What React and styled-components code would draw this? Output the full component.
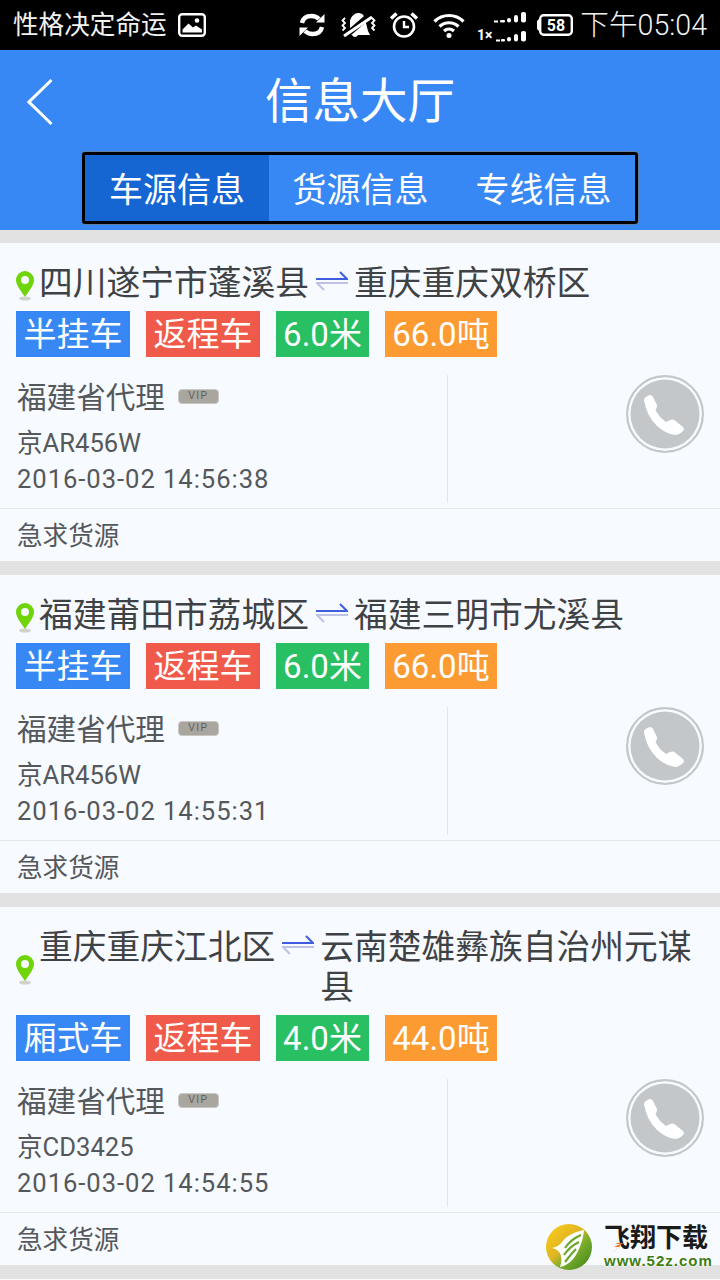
import React from 'react'
import styled, { createGlobalStyle } from 'styled-components'

const COLOR = {
  blue: '#3788f4',
  blueDark: '#1565d3',
  red: '#ef5a4a',
  green: '#28c063',
  orange: '#fb9b32',
  gap: '#e2e2e2',
  card: '#f7faff',
  line: '#e3e5e6',
  text: '#3f4245',
  sub: '#55585b',
}

const FONT = `Roboto, 'Noto Sans CJK SC', sans-serif`

const GlobalStyle = createGlobalStyle`
  html, body {
    margin: 0;
    padding: 0;
    background: ${COLOR.card};
  }
  * {
    box-sizing: border-box;
  }
`

const Page = styled.div`
  position: relative;
  width: 720px;
  height: 1280px;
  overflow: hidden;
  background: ${COLOR.card};
  font-family: ${FONT};
`

const StatusBar = styled.div`
  display: flex;
  align-items: center;
  justify-content: space-between;
  height: 50px;
  padding: 0 13px;
  background: #000;
  color: #f2f2f2;
`

const StatusGroup = styled.div`
  display: flex;
  align-items: center;
`

const StatusTitle = styled.span`
  font-size: 25.6px;
  line-height: 50px;
  margin-right: 11px;
`

const StatusTime = styled.span`
  font-size: 28.6px;
  font-weight: 300;
  line-height: 52px;
`

const StatusIcon = styled.svg`
  display: block;
  flex: none;
  overflow: visible;
  margin-left: ${(p) => p.$gap || 0}px;
  margin-top: ${(p) => p.$top || 0}px;
`

const Header = styled.div`
  background: ${COLOR.blue};
  border-bottom: 13px solid ${COLOR.gap};
  height: 193px;
  padding-top: 22px;
`

const TitleRow = styled.div`
  position: relative;
  display: flex;
  align-items: center;
  justify-content: center;
  height: 60px;
`

const BackIcon = styled.svg`
  position: absolute;
  left: 27px;
  top: 6px;
`

const Title = styled.div`
  color: #fff;
  font-size: 47.5px;
  line-height: 60px;
`

const Tabs = styled.div`
  display: flex;
  width: 556px;
  height: 72px;
  margin: 20px auto 0;
  border: 3px solid #000;
  border-radius: 3px;
  box-shadow: 0 0 0 1px #5f7ea8;
`

const Tab = styled.div`
  flex: ${(p) => (p.$active ? '0 0 184px' : 1)};
  display: flex;
  align-items: center;
  justify-content: center;
  padding-bottom: 2px;
  color: #fff;
  font-size: 34px;
  background: ${(p) => (p.$active ? COLOR.blueDark : 'transparent')};
`

const Card = styled.div`
  border-bottom: 14px solid ${COLOR.gap};
  padding-top: 21px;
`

const Route = styled.div`
  display: flex;
  align-items: center;
  padding: 0 16px;
  color: ${COLOR.text};
  font-size: 33.75px;
  line-height: 40px;
`

const PinIcon = styled.svg`
  flex: none;
  margin: 3px 5px 0 0;
`

const Place = styled.div`
  flex: ${(p) => (p.$grow ? 1 : 'none')};
  align-self: flex-start;
`

const SwapIcon = styled.svg`
  flex: none;
  align-self: flex-start;
  margin: 7px 6px 0 7px;
`

const TagRow = styled.div`
  display: flex;
  gap: 16px;
  padding: 7px 16px 0;
`

const Tag = styled.div`
  min-width: ${(p) => p.$min || 0}px;
  height: 46px;
  padding: 0 7px;
  background: ${(p) => p.$color};
  color: #fff;
  font-size: 33px;
  line-height: 48px;
  text-align: center;
  white-space: nowrap;
`

const Info = styled.div`
  display: flex;
  height: 128px;
  margin-top: 18px;
`

const Owner = styled.div`
  width: 448px;
  padding-left: 17px;
  border-right: 1px solid ${COLOR.line};
  color: ${COLOR.sub};
`

const OwnerName = styled.div`
  display: flex;
  align-items: center;
  height: 40px;
  font-size: 29.6px;
`

const Vip = styled.span`
  display: block;
  width: 41px;
  height: 15px;
  margin: 2px 0 0 13px;
  border: 1.5px solid #c9c7c3;
  border-radius: 4px;
  background: #a9a6a0;
  color: #5f5c57;
  font-family: 'Liberation Sans', sans-serif;
  font-size: 10px;
  line-height: 12px;
  letter-spacing: 1.5px;
  text-align: center;
`

const Plate = styled.div`
  margin-top: 10px;
  font-size: 25.6px;
  line-height: 36px;
`

const DateText = styled.div`
  font-size: 25.6px;
  line-height: 36px;
  letter-spacing: 0.95px;
`

const CallCell = styled.div`
  flex: 1;
  display: flex;
  justify-content: flex-end;
  padding-right: 16px;
`

const CallButton = styled.div`
  display: flex;
  align-items: center;
  justify-content: center;
  width: 78px;
  height: 78px;
  border: 2px solid #c4c7c9;
  border-radius: 50%;
  background: #c3c7ca;
  box-shadow: inset 0 0 0 2.5px ${COLOR.card};
`

const Note = styled.div`
  height: 53px;
  margin-top: 5px;
  padding-left: 17px;
  border-top: 1px solid ${COLOR.line};
  color: ${COLOR.sub};
  font-size: 25.6px;
  line-height: 54px;
`

const Watermark = styled.div`
  position: absolute;
  left: 546px;
  top: 1224px;
  display: flex;
  align-items: center;
  gap: 12px;
`

const MarkText = styled.div`
  position: relative;
  display: flex;
  flex-direction: column;
  text-shadow: 0 0 2px #fff, 0 0 2px #fff;
`

const MarkName = styled.div`
  color: #1b1b1b;
  font-size: 26px;
  font-weight: 700;
  line-height: 27px;
  white-space: nowrap;
`

const MarkUrl = styled.div`
  color: #3f7d12;
  font-family: 'Liberation Sans', sans-serif;
  font-size: 15px;
  font-weight: 700;
  letter-spacing: 1px;
  line-height: 18px;
  white-space: nowrap;
`

const Bolt = styled.svg`
  position: absolute;
  left: 7px;
  top: 13px;
`

const Pin = () => (
  <PinIcon width="18" height="30" viewBox="0 0 18 30">
    <ellipse cx="9" cy="27.5" rx="6" ry="2" fill="#cfd3cc" />
    <path d="M9 0a9 9 0 0 1 9 9c0 5-5 11-9 17C5 20 0 14 0 9a9 9 0 0 1 9-9z" fill="#6fd40a" />
    <circle cx="9" cy="9" r="4" fill="#f7faff" />
  </PinIcon>
)

const Swap = () => (
  <SwapIcon width="32" height="20" viewBox="0 0 32 20" fill="none" strokeWidth="2">
    <path d="M0 8h31L24 1" stroke="#3f5de0" />
    <path d="M32 12H1l7 7" stroke="#bcc3e6" />
  </SwapIcon>
)

const Phone = () => (
  <svg width="46" height="46" viewBox="0 0 46 46">
    <path
      d="M2 9Q2 6 8 4Q10 4 11 6L15 14Q15.500 16 13.500 19Q17 26 24 31Q27 29 30 28.500Q32 28.500 33 29.500L41 36Q43 38 41 40Q37 44 33 44Q24 43 15 35Q4 24 2 9z"
      fill="#fff"
    />
  </svg>
)

const Logo = () => (
  <svg width="46" height="46" viewBox="0 0 46 46">
    <defs>
      <linearGradient id="markFill" x1="0.1" y1="0.1" x2="0.9" y2="0.9">
        <stop offset="0" stopColor="#f8c81c" />
        <stop offset="0.42" stopColor="#e0b522" />
        <stop offset="0.62" stopColor="#7fb02c" />
        <stop offset="1" stopColor="#4a8c1c" />
      </linearGradient>
    </defs>
    <circle cx="23" cy="23" r="23" fill="url(#markFill)" />
    <path d="M38 6C29 8 21 11 16 18c-2 3-5 5-10 6 5 1 8 4 9 8 1 4 0 8-1 11 5-1 10-4 14-9 5-7 9-17 10-28z" fill="#fff" />
    <path d="M19 24c4-6 9-10 16-13M18 31c4-6 9-10 15-13M19 38c4-5 7-9 11-13" stroke="#6aa82b" strokeWidth="2.200" fill="none" />
  </svg>
)

const PictureIcon = () => (
  <StatusIcon width="28" height="24" viewBox="0 0 28 24">
    <rect x="1.200" y="1.200" width="25.600" height="21.600" rx="3" fill="none" stroke="#fff" strokeWidth="2.400" />
    <path d="M4.500 19.500v-3l6-6 4.500 4 3-2 6 4v3z" fill="#fff" />
    <circle cx="19" cy="7.500" r="2.300" fill="#fff" />
  </StatusIcon>
)

const SyncIcon = () => (
  <StatusIcon $gap={93} width="26" height="24" viewBox="0 0 26 24" fill="none">
    <path d="M3 10C4 5 8 3 12.500 3c3 0 5.500 1 7.500 3" stroke="#fff" strokeWidth="4.400" />
    <path d="M17 9.500h8.500V1z" fill="#fff" />
    <path d="M23 14c-1 5-5 7-9.500 7-3 0-5.500-1-7.500-3" stroke="#fff" strokeWidth="4.400" />
    <path d="M9 14.500H.5V23z" fill="#fff" />
  </StatusIcon>
)

const MuteIcon = () => (
  <StatusIcon $gap={16} width="35" height="24" viewBox="0 0 35 24" fill="none">
    <path d="M9 8C10 3 14 0 17 0C21 0 23 2 24 6L27 18L29 22H17Q16 24 14 24Q12 24 11 22H7L9 18z" fill="#fff" />
    <path d="M1 26L30 1" stroke="#000" strokeWidth="6" />
    <path d="M3 23L31 4" stroke="#fff" strokeWidth="3" />
    <path d="M4 5L1.500 7.500 4 10 1.500 12.500 4 15 1.500 17.500M31 5L33.500 7.500 31 10 33.500 12.500 31 15 33.500 17.500" stroke="#fff" strokeWidth="1.800" />
  </StatusIcon>
)

const AlarmIcon = () => (
  <StatusIcon $gap={14} width="28" height="26" viewBox="0 0 28 26" fill="none" stroke="#fff">
    <circle cx="14" cy="14.500" r="10" strokeWidth="2.600" />
    <path d="M14 9v6h5" strokeWidth="2.400" />
    <path d="M1 6.500L6.500 1.500M27 6.500L21.500 1.500" strokeWidth="3.600" />
  </StatusIcon>
)

const WifiIcon = () => (
  <StatusIcon $gap={15} width="32" height="26" viewBox="0 0 32 26" fill="none" stroke="#fff" strokeWidth="3.200">
    <path d="M1.500 9.500c8-8 21-8 29 0" />
    <path d="M6.500 14.500c5.500-5 13.500-5 19 0" />
    <path d="M11 19c3-2.500 7-2.500 10 0" />
    <circle cx="16" cy="23.500" r="2.500" fill="#fff" stroke="none" />
  </StatusIcon>
)

const SignalIcon = () => (
  <StatusIcon $gap={12} $top={4} width="50" height="30" viewBox="0 0 50 30" fill="#fff">
    <text x="0" y="28" fontSize="14" fontWeight="700" fill="#fff" fontFamily="Roboto, sans-serif">1×</text>
    <rect x="17" y="8.500" width="4" height="2" />
    <rect x="23" y="8" width="5" height="2.500" rx="1" />
    <rect x="30" y="6" width="4" height="4.500" rx="2" />
    <rect x="37" y="3" width="4" height="7.500" rx="2" />
    <rect x="44" y="0" width="5" height="10.500" rx="2" />
    <rect x="19" y="27.500" width="4" height="2" />
    <rect x="24" y="27" width="4" height="2.500" rx="1" />
    <rect x="30" y="25" width="4" height="4.500" rx="2" />
    <rect x="37" y="22" width="4" height="7.500" rx="2" />
    <rect x="44" y="19" width="5" height="10.500" rx="2" />
  </StatusIcon>
)

const BatteryIcon = () => (
  <StatusIcon $gap={9} width="37" height="22" viewBox="0 0 37 22">
    <path d="M3 5L1 7v8l2 2z" fill="#fff" />
    <rect x="4.200" y="1.200" width="31.600" height="19.600" rx="3.500" fill="none" stroke="#fff" strokeWidth="2.400" />
    <text x="20" y="17" fontSize="16" fontWeight="700" textAnchor="middle" fill="#fff" fontFamily="Roboto, sans-serif">58</text>
  </StatusIcon>
)

const ROWS = [
  {
    from: '四川遂宁市蓬溪县',
    to: '重庆重庆双桥区',
    tags: ['半挂车', '返程车', '6.0米', '66.0吨'],
    plate: '京AR456W',
    time: '2016-03-02 14:56:38',
  },
  {
    from: '福建莆田市荔城区',
    to: '福建三明市尤溪县',
    tags: ['半挂车', '返程车', '6.0米', '66.0吨'],
    plate: '京AR456W',
    time: '2016-03-02 14:55:31',
  },
  {
    from: '重庆重庆江北区',
    to: '云南楚雄彝族自治州元谋县',
    tags: ['厢式车', '返程车', '4.0米', '44.0吨'],
    plate: '京CD3425',
    time: '2016-03-02 14:54:55',
  },
]

const TAG_COLORS = [COLOR.blue, COLOR.red, COLOR.green, COLOR.orange]
const TAG_WIDTHS = [114, 114, 93, 112]

export default function App() {
  return (
    <Page>
      <GlobalStyle />
      <StatusBar>
        <StatusGroup>
          <StatusTitle>性格决定命运</StatusTitle>
          <PictureIcon />
          <SyncIcon />
          <MuteIcon />
          <AlarmIcon />
          <WifiIcon />
          <SignalIcon />
          <BatteryIcon />
        </StatusGroup>
        <StatusTime>下午05:04</StatusTime>
      </StatusBar>
      <Header>
        <TitleRow>
          <BackIcon width="26" height="48" viewBox="0 0 26 48" fill="none" stroke="#fff" strokeWidth="3">
            <path d="M24.500 2L2 24l22.500 22" />
          </BackIcon>
          <Title>信息大厅</Title>
        </TitleRow>
        <Tabs>
          <Tab $active>车源信息</Tab>
          <Tab>货源信息</Tab>
          <Tab>专线信息</Tab>
        </Tabs>
      </Header>
      {ROWS.map((row) => (
        <Card key={row.time}>
          <Route>
            <Pin />
            <Place>{row.from}</Place>
            <Swap />
            <Place $grow>{row.to}</Place>
          </Route>
          <TagRow>
            {row.tags.map((tag, i) => (
              <Tag key={tag} $color={TAG_COLORS[i]} $min={TAG_WIDTHS[i]}>{tag}</Tag>
            ))}
          </TagRow>
          <Info>
            <Owner>
              <OwnerName>
                福建省代理
                <Vip>VIP</Vip>
              </OwnerName>
              <Plate>{row.plate}</Plate>
              <DateText>{row.time}</DateText>
            </Owner>
            <CallCell>
              <CallButton>
                <Phone />
              </CallButton>
            </CallCell>
          </Info>
          <Note>急求货源</Note>
        </Card>
      ))}
      <Watermark>
        <Logo />
        <MarkText>
          <MarkName>飞翔下载</MarkName>
          <Bolt width="18" height="16" viewBox="0 0 18 16">
            <path d="M11 0L6 5l6 0L0 16l8-7-5 0 6-3-4 0z" fill="#f0701e" />
          </Bolt>
          <MarkUrl>www.52z.com</MarkUrl>
        </MarkText>
      </Watermark>
    </Page>
  )
}
